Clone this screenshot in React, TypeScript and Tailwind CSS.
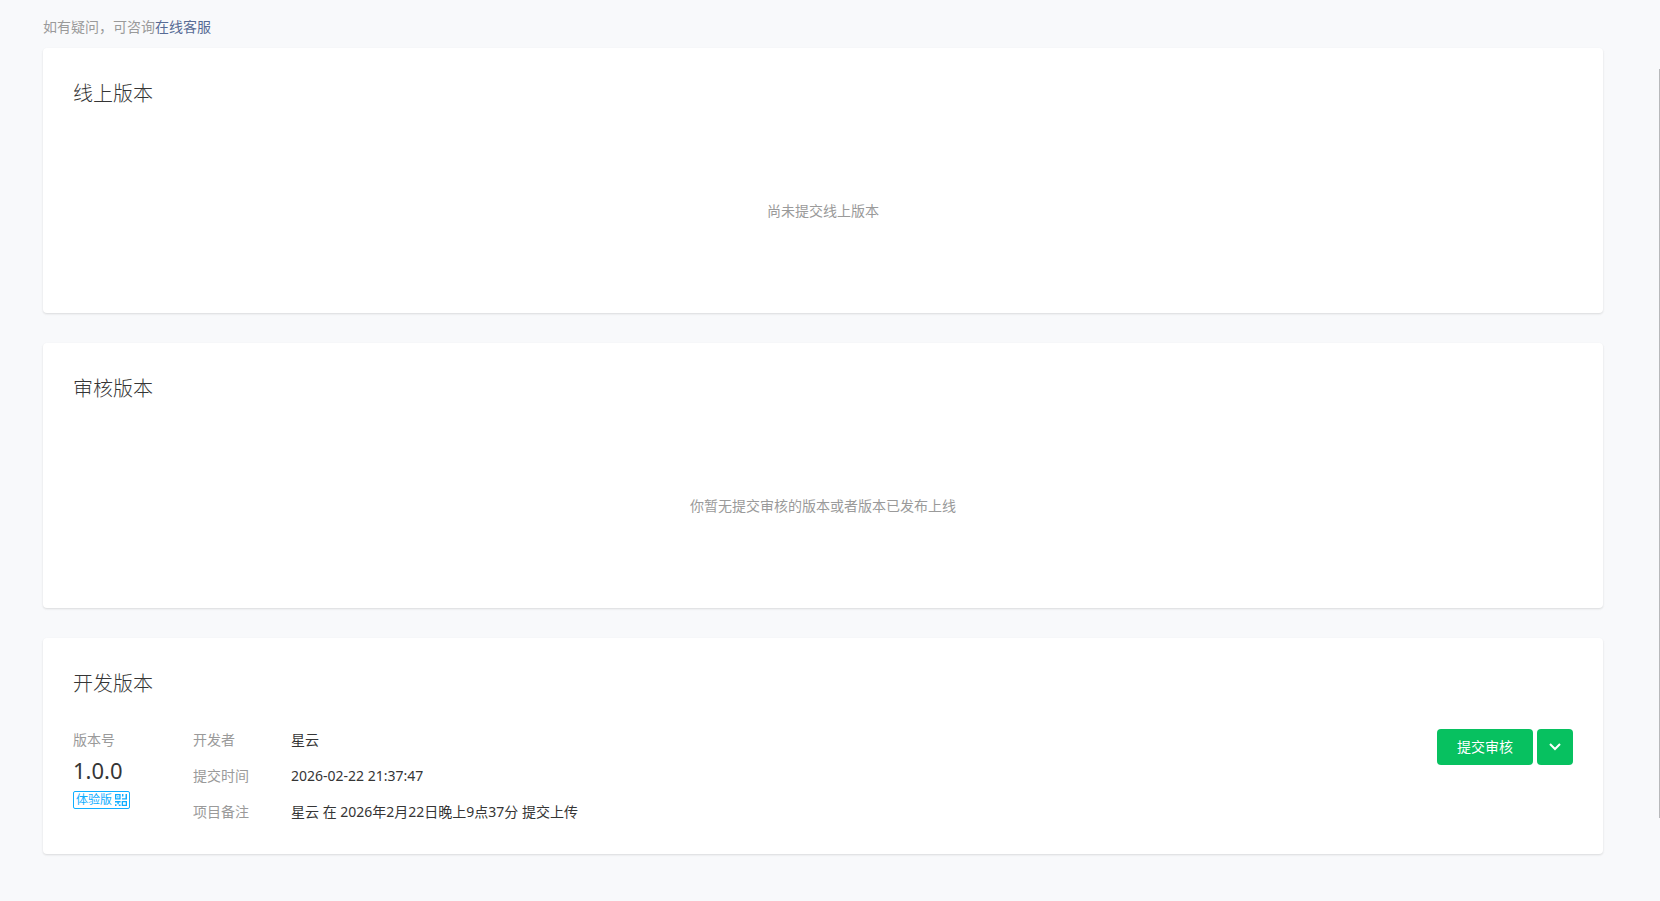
import type { ReactNode } from 'react';

type CardProps = { title: string; children: ReactNode };

function Card({ title, children }: CardProps) {
  return (
    <section className="rounded-sm bg-white px-[30px] pt-[30px] shadow-[0_1px_2px_rgba(150,150,150,0.3)]">
      <h3 className="text-xl leading-8 font-light text-[#353535]">{title}</h3>
      {children}
    </section>
  );
}

function EmptyState({ children }: { children: ReactNode }) {
  return <p className="pt-[90px] pb-[91px] text-center text-[#9a9a9a]">{children}</p>;
}

function QrIcon() {
  return (
    <svg width="12" height="12" viewBox="0 0 12 12" fill="currentColor" aria-hidden="true">
      <path fillRule="evenodd" d="M0 0h5.6v5.6H0zM1.3 1.3v3h3v-3zM6.7 7h5.3v5H6.7zM8 8.3v2.4h2.7V8.3z" />
      <path d="M2.2 2.2h1.3v1.3H2.2zM7 0h1.4v2.6H7zM10.5 0H12v5.6H7V4.2h3.5zM0 7h5.6v1.4H3.8v1.9H2.4V8.4H0zM0 10.2h1.5V12H0zM3.8 10.6h1.8V12H3.8z" />
    </svg>
  );
}

const details = [
  { label: '开发者', value: '星云' },
  { label: '提交时间', value: '2026-02-22 21:37:47' },
  { label: '项目备注', value: '星云 在 2026年2月22日晚上9点37分 提交上传' },
];

export default function App() {
  return (
    <div className="flex min-h-screen items-start bg-[#f8f9fb] font-['Noto_Sans','Noto_Sans_CJK_SC',sans-serif] text-sm leading-[22px] text-[#353535]">
      <main className="min-w-0 flex-1 pt-4 pr-14 pb-[46px] pl-[43px]">
        <p className="mb-[10px] text-[#9a9a9a]">
          如有疑问，可咨询<a href="#service" className="text-[#576b95]">在线客服</a>
        </p>
        <div className="flex flex-col gap-[30px]">
          <Card title="线上版本">
            <EmptyState>尚未提交线上版本</EmptyState>
          </Card>
          <Card title="审核版本">
            <EmptyState>你暂无提交审核的版本或者版本已发布上线</EmptyState>
          </Card>
          <Card title="开发版本">
            <div className="flex items-start pt-[29px] pb-[31px]">
              <div className="w-[120px] shrink-0">
                <p className="text-[#9a9a9a]">版本号</p>
                <p className="mt-1 text-[22px] leading-[30px]">1.0.0</p>
                <button type="button" className="mt-[6px] flex h-[18px] items-center gap-[3px] rounded-xs border border-[#10aeff] px-[2px] text-xs leading-4 text-[#10aeff]">
                  体验版
                  <QrIcon />
                </button>
              </div>
              <dl className="grid flex-1 grid-cols-[98px_1fr] gap-y-[14px]">
                {details.map(({ label, value }) => (
                  <div key={label} className="contents">
                    <dt className="text-[#9a9a9a]">{label}</dt>
                    <dd>{value}</dd>
                  </div>
                ))}
              </dl>
              <div className="flex gap-1 text-white">
                <button type="button" className="h-9 rounded-sm bg-[#07c160] px-5">提交审核</button>
                <button type="button" aria-label="更多操作" className="flex size-9 items-center justify-center rounded-sm bg-[#07c160]">
                  <svg width="12" height="8" viewBox="0 0 12 8" fill="none" stroke="currentColor" strokeWidth="2" aria-hidden="true">
                    <path d="M1 1l5 5 5-5" />
                  </svg>
                </button>
              </div>
            </div>
          </Card>
        </div>
      </main>
      <div className="mt-[69px] h-[749px] w-px bg-[#b8b9bb]" />
    </div>
  );
}
